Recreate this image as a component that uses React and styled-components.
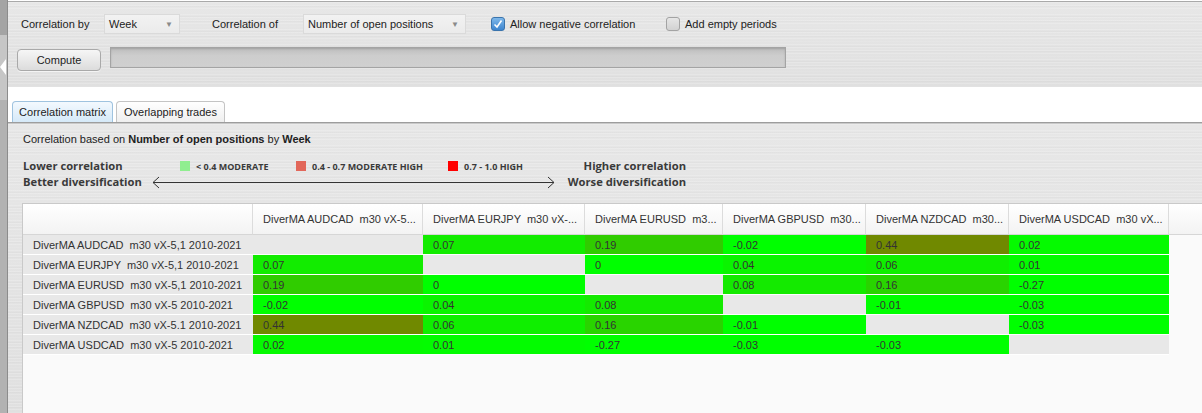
import React from 'react';
import styled, { createGlobalStyle, css } from 'styled-components';

const GlobalStyle = createGlobalStyle`
  html, body, #root {
    height: 100%;
    margin: 0;
  }
  body {
    font-family: "Liberation Sans", Arial, sans-serif;
    font-size: 11px;
    color: #222;
    background: #fff;
    overflow: hidden;
  }
`;

const brushed = css`
  background:
    repeating-linear-gradient(0deg, rgba(255,255,255,0.18) 0 1px, transparent 1px 3px),
    repeating-linear-gradient(0deg, rgba(0,0,0,0.02) 0 1px, transparent 1px 5px),
    linear-gradient(#e7e7e7, #e0e0e0);
`;

const Frame = styled.div`
  display: flex;
  height: 100%;
`;

const SideStrip = styled.div`
  width: 8px;
  flex: none;
  box-sizing: border-box;
  border-right: 1px solid #8c8c8c;
  background: linear-gradient(#a4a4a4 0 35px, #c6c6c6 35px 100px, #b2b2b2 100px);
  padding-top: 58px;
`;

const Main = styled.div`
  flex: 1;
  min-width: 0;
  display: flex;
  flex-direction: column;
`;

const Toolbar = styled.div`
  ${brushed};
  height: 87px;
  box-sizing: border-box;
  border-top: 1px solid #fff;
  box-shadow: inset 0 1px 0 #a9a9a9;
  padding: 13px 0 0 9px;
`;

const ToolRow = styled.div`
  display: flex;
  align-items: center;
  height: 20px;
  margin-top: ${p => p.$top || 0}px;
`;

const Label = styled.span`
  width: ${p => p.$w}px;
  margin-left: ${p => p.$ml || 0}px;
  flex: none;
  color: #222;
`;

const Combo = styled.div`
  width: ${p => p.$w}px;
  margin-right: ${p => p.$mr || 0}px;
  height: 20px;
  flex: none;
  box-sizing: border-box;
  display: flex;
  align-items: center;
  justify-content: space-between;
  padding: 0 6px 0 4px;
  background: linear-gradient(#f2f2f2, #ebebeb);
  border: 1px solid #dadada;
  color: #222;
`;

const ComboArrow = styled.span`
  font-size: 8px;
  color: #8a8a8a;
`;

const CheckItem = styled.label`
  width: ${p => p.$w || 'auto'};
  flex: none;
  display: flex;
  align-items: center;
  gap: 5px;
`;

const Box = styled.span`
  width: 14px;
  height: 14px;
  box-sizing: border-box;
  border-radius: 3px;
  display: inline-flex;
  align-items: center;
  justify-content: center;
  ${p => p.$checked ? css`
    background: linear-gradient(#7eb8ea, #3d85cf);
    border: 1px solid #3a74ad;
  ` : css`
    background: linear-gradient(#e6e6e6, #d2d2d2);
    border: 1px solid #a3a3a3;
  `}
`;

const Button = styled.button`
  width: 84px;
  height: 22px;
  margin-top: 4px;
  flex: none;
  font: inherit;
  color: #222;
  border: 1px solid #a9a9a9;
  border-radius: 4px;
  background: linear-gradient(#f6f6f6, #dcdcdc);
  box-shadow: 0 1px 0 rgba(255,255,255,0.6);
  padding: 0;
`;

const Progress = styled.div`
  width: 676px;
  height: 21px;
  margin-left: 9px;
  margin-top: -1px;
  box-sizing: border-box;
  border: 1px solid #a4a4a4;
  background: linear-gradient(#bdbdbd, #cdcdcd 40%, #d0d0d0);
  box-shadow: inset 0 1px 2px rgba(0,0,0,0.15);
`;

const TabBar = styled.div`
  display: flex;
  gap: 3px;
  padding: 14px 0 0 4px;
  background: #fff;
`;

const Tab = styled.div`
  width: ${p => p.$w}px;
  height: 21px;
  box-sizing: border-box;
  display: flex;
  align-items: center;
  justify-content: center;
  border-radius: 4px 4px 0 0;
  border: 1px solid ${p => p.$active ? '#9fc3df' : '#c4c4c4'};
  border-bottom: none;
  background: ${p => p.$active
    ? 'linear-gradient(#f3f9fe, #d5e9f8)'
    : 'linear-gradient(#ffffff, #efefef)'};
  color: #222;
`;

const Content = styled.div`
  ${brushed};
  flex: 1;
  display: flex;
  flex-direction: column;
  border-top: 1px solid #9d9d9d;
  box-shadow: inset 0 1px 0 #c9c9c9;
  padding-left: 14px;
  min-height: 0;
`;

const Caption = styled.div`
  margin: 9px 0 0 1px;
  line-height: 14px;
  color: #222;
  b { font-weight: bold; }
`;

const Legend = styled.div`
  display: flex;
  margin: 12px 0 0 1px;
  font-family: "Open Sans", "DejaVu Sans", sans-serif;
  font-weight: 700;
  color: #3a3a3a;
`;

const LegendSide = styled.div`
  width: ${p => p.$w}px;
  margin-left: ${p => p.$ml || 0}px;
  flex: none;
  text-align: ${p => p.$right ? 'right' : 'left'};
  font-size: 11.2px;
  line-height: 16px;
  white-space: nowrap;
`;

const LegendMiddle = styled.div`
  width: 403px;
  flex: none;
  display: flex;
  flex-direction: column;
`;

const SwatchRow = styled.div`
  height: 16px;
  display: flex;
  align-items: center;
  padding-left: 28px;
`;

const SwatchItem = styled.div`
  width: ${p => p.$w ? `${p.$w}px` : 'auto'};
  flex: none;
  display: flex;
  align-items: center;
  gap: 6px;
  font-size: 9px;
  white-space: nowrap;
`;

const Swatch = styled.span`
  width: 10px;
  height: 10px;
  background: ${p => p.$color};
`;

const Matrix = styled.div`
  flex: 1;
  margin-top: 13px;
  background: #fafafa;
  border-top: 1px solid #c9c9c9;
  border-left: 1px solid #c9c9c9;
`;

const GridRow = styled.div`
  display: grid;
  grid-template-columns: 230px 170px 162px 138px 143px 143px 160px 1fr;
`;

const HeadCell = styled.div`
  height: 31px;
  box-sizing: border-box;
  padding-left: 10px;
  display: flex;
  align-items: center;
  background: linear-gradient(#ffffff, #f3f3f3);
  border-right: ${p => p.$last ? 'none' : '1px solid #dcdcdc'};
  border-bottom: 1px solid #d6d6d6;
  color: #333;
  white-space: pre;
  overflow: hidden;
`;

const Cell = styled.div`
  height: 20px;
  box-sizing: border-box;
  padding-left: 10px;
  display: flex;
  align-items: center;
  border-bottom: 1px solid #fff;
  background: #e8e8e8;
  color: #333;
  white-space: pre;
`;

const cols = [
  'DiverMA AUDCAD  m30 vX-5...',
  'DiverMA EURJPY  m30 vX-...',
  'DiverMA EURUSD  m3...',
  'DiverMA GBPUSD  m30...',
  'DiverMA NZDCAD  m30...',
  'DiverMA USDCAD  m30 vX...',
];

const rows = [
  { label: 'DiverMA AUDCAD  m30 vX-5,1 2010-2021', values: [null, '0.07', '0.19', '-0.02', '0.44', '0.02'] },
  { label: 'DiverMA EURJPY  m30 vX-5,1 2010-2021', values: ['0.07', null, '0', '0.04', '0.06', '0.01'] },
  { label: 'DiverMA EURUSD  m30 vX-5,1 2010-2021', values: ['0.19', '0', null, '0.08', '0.16', '-0.27'] },
  { label: 'DiverMA GBPUSD  m30 vX-5 2010-2021', values: ['-0.02', '0.04', '0.08', null, '-0.01', '-0.03'] },
  { label: 'DiverMA NZDCAD  m30 vX-5.1 2010-2021', values: ['0.44', '0.06', '0.16', '-0.01', null, '-0.03'] },
  { label: 'DiverMA USDCAD  m30 vX-5 2010-2021', values: ['0.02', '0.01', '-0.27', '-0.03', '-0.03', null] },
];

// self-correlation stays grey, others fade from green toward red
function cellColor(v) {
  if (v === null) return '#e8e8e8';
  const t = Math.max(0, parseFloat(v));
  return `rgb(${Math.round(255 * t)}, ${Math.round(255 * (1 - t * 1.05))}, 0)`;
}

function Check({ checked }) {
  return (
    <Box $checked={checked}>
      {checked && (
        <svg width="10" height="10" viewBox="0 0 10 10">
          <path d="M1.5 5.5 L4 8 L8.5 1.5" fill="none" stroke="#fff" strokeWidth="1.6" />
        </svg>
      )}
    </Box>
  );
}

export default function App() {
  return (
    <>
      <GlobalStyle />
      <Frame>
        <SideStrip>
          <svg width="6" height="18" viewBox="0 0 6 18">
            <path d="M0 9 L6 1 L6 17 Z" fill="#fff" />
          </svg>
        </SideStrip>
        <Main>
          <Toolbar>
            <ToolRow>
              <Label $w={83} $ml={4}>Correlation by</Label>
              <Combo $w={76} $mr={32}>Week<ComboArrow>▼</ComboArrow></Combo>
              <Label $w={91}>Correlation of</Label>
              <Combo $w={163} $mr={25}>Number of open positions<ComboArrow>▼</ComboArrow></Combo>
              <CheckItem $w="175px"><Check checked />Allow negative correlation</CheckItem>
              <CheckItem><Check />Add empty periods</CheckItem>
            </ToolRow>
            <ToolRow $top={14}>
              <Button>Compute</Button>
              <Progress />
            </ToolRow>
          </Toolbar>

          <TabBar>
            <Tab $w={101} $active>Correlation matrix</Tab>
            <Tab $w={109}>Overlapping trades</Tab>
          </TabBar>

          <Content>
            <Caption>
              Correlation based on <b>Number of open positions</b> by <b>Week</b>
            </Caption>

            <Legend>
              <LegendSide $w={129}>
                Lower correlation<br />Better diversification
              </LegendSide>
              <LegendMiddle>
                <SwatchRow>
                  <SwatchItem $w={116}><Swatch $color="#90ee90" />&lt; 0.4 MODERATE</SwatchItem>
                  <SwatchItem $w={152}><Swatch $color="#e2675a" />0.4 - 0.7 MODERATE HIGH</SwatchItem>
                  <SwatchItem><Swatch $color="#ff0000" />0.7 - 1.0 HIGH</SwatchItem>
                </SwatchRow>
                <svg width="403" height="16" viewBox="0 0 403 16">
                  <path d="M1 8.5 H402 M7 3 L1 8.5 L7 14 M396 3 L402 8.5 L396 14" fill="none" stroke="#333" strokeWidth="1" />
                </svg>
              </LegendMiddle>
              <LegendSide $w={119} $ml={12} $right>
                Higher correlation<br />Worse diversification
              </LegendSide>
            </Legend>

            <Matrix>
              <GridRow>
                <HeadCell />
                {cols.map(c => <HeadCell key={c}>{c}</HeadCell>)}
                <HeadCell $last />
              </GridRow>
              {rows.map(r => (
                <GridRow key={r.label}>
                  <Cell>{r.label}</Cell>
                  {r.values.map((v, i) => (
                    <Cell key={i} style={{ background: cellColor(v) }}>{v}</Cell>
                  ))}
                </GridRow>
              ))}
            </Matrix>
          </Content>
        </Main>
      </Frame>
    </>
  );
}
